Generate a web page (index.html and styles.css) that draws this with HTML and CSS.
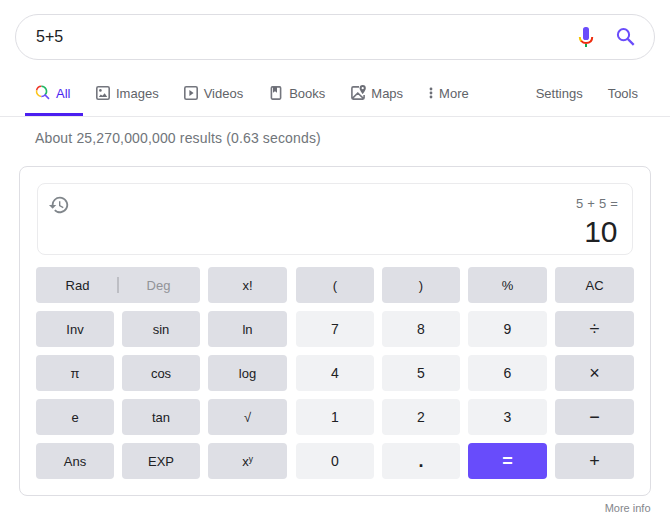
FILE: index.html
```html
<!DOCTYPE html>
<html lang="en">
<head>
<meta charset="utf-8">
<title>5+5</title>
<link rel="stylesheet" href="styles.css">
</head>
<body>
<header class="search">
  <span class="query">5+5</span>
  <svg class="mic" viewBox="0 0 24 24" width="24" height="24" fill="none" stroke-width="2">
    <rect x="9" y="2" width="6" height="13" rx="2.6" fill="#6a4cfb"/>
    <path d="M5.8 12q0 2.5 1.6 4.2" stroke="#f5c400"/>
    <path d="M7.2 15.8Q9.2 18 12 18q6.2 0 6.2-6" stroke="#ee2c0e"/>
    <path d="M12 19v3" stroke="#12a84f"/>
  </svg>
  <svg class="glass" viewBox="0 0 24 24" width="24" height="24" fill="none" stroke="#6a4cfb" stroke-width="2">
    <circle cx="9.5" cy="9.7" r="5.6"/><path d="M13.7 13.9l6 6" stroke-width="2.2"/>
  </svg>
</header>
<nav class="tabs">
  <a class="tab active"><svg viewBox="0 0 16 16" fill="none" stroke-width="1.5">
    <path d="M1.6 5.4A5 5 0 0 1 6.4 1.3" stroke="#ee3524"/><path d="M6.4 1.3a5 5 0 0 1 3.6 8.6" stroke="#20b866"/>
    <path d="M1.6 5.4a5 5 0 0 0 4.8 6" stroke="#fcc51a"/><path d="M6.4 11.4a5 5 0 0 0 3.6-1.5l4 4" stroke="#6a4cfb"/>
  </svg>All</a>
  <a class="tab"><svg viewBox="0 0 16 16"><rect class="line" x="1.8" y="1.8" width="12.4" height="12.4" rx="1.4"/><circle cx="5.4" cy="5.4" r="1.3"/><path d="M3.8 12l2-2.4 1.6 1.2 2.3-2.6 2.5 3.8z"/></svg>Images</a>
  <a class="tab"><svg viewBox="0 0 16 16"><rect class="line" x="1.8" y="1.8" width="12.4" height="12.4" rx="1.4"/><path d="M6.4 5v6l4.2-3z"/></svg>Videos</a>
  <a class="tab books"><svg viewBox="0 0 16 16"><rect class="line" x="3.4" y="1.9" width="9.2" height="12.2" rx="1"/><path d="M5 2h4v5.8L7 6.3 5 7.8z"/></svg>Books</a>
  <a class="tab maps"><svg viewBox="0 0 16 16"><path class="line" d="M9 1.9H3.2Q1.9 1.9 1.9 3.2v9.6q0 1.3 1.3 1.3h9.6q1.3 0 1.3-1.3V10M2.4 13.4L7.8 8l5.8 5.6"/><path fill-rule="evenodd" d="M12.7 0A3.1 3.1 0 0 0 9.6 3.2c0 2.2 3.1 5.8 3.1 5.8s3.1-3.6 3.1-5.8A3.1 3.1 0 0 0 12.7 0zm0 2.1a1.1 1.1 0 1 1 0 2.2 1.1 1.1 0 0 1 0-2.2z"/></svg>Maps</a>
  <a class="tab more"><svg viewBox="0 0 16 16"><circle cx="8" cy="4" r="1.4"/><circle cx="8" cy="8" r="1.4"/><circle cx="8" cy="12" r="1.4"/></svg>More</a>
  <a class="tool settings">Settings</a>
  <a class="tool">Tools</a>
</nav>
<p class="stats">About 25,270,000,000 results (0.63 seconds)</p>
<main class="card">
  <div class="display">
    <svg viewBox="0 0 24 24" width="22" height="22" fill="#80868b"><path d="M13 3a9 9 0 0 0-9 9H1l3.9 3.9.1.1 4-4H6a7 7 0 1 1 2.1 4.9l-1.4 1.5A9 9 0 1 0 13 3zm-1 5v5l4.3 2.5.7-1.2-3.5-2.1V8z"/></svg>
    <div class="readout"><div class="expr">5 + 5 =</div><div class="result">10</div></div>
  </div>
  <div class="keys">
    <div class="key mode"><span>Rad</span><i></i><span class="off">Deg</span></div>
    <div class="key">x!</div><div class="key">(</div><div class="key">)</div><div class="key">%</div><div class="key">AC</div>
    <div class="key">Inv</div><div class="key">sin</div><div class="key">ln</div><div class="key num">7</div><div class="key num">8</div><div class="key num">9</div><div class="key op">÷</div>
    <div class="key">π</div><div class="key">cos</div><div class="key">log</div><div class="key num">4</div><div class="key num">5</div><div class="key num">6</div><div class="key op">×</div>
    <div class="key">e</div><div class="key">tan</div><div class="key">√</div><div class="key num">1</div><div class="key num">2</div><div class="key num">3</div><div class="key op">−</div>
    <div class="key">Ans</div><div class="key">EXP</div><div class="key"><span>x<sup>y</sup></span></div><div class="key num">0</div><div class="key num dot">.</div><div class="key equals">=</div><div class="key op">+</div>
  </div>
</main>
<footer class="info">More info</footer>
</body>
</html>
```
FILE: styles.css
```css
* { box-sizing: border-box; }
body {
  margin: 0;
  height: 520px;
  overflow: hidden;
  background: #fff;
  color: #202124;
  font-family: "Liberation Sans", Arial, sans-serif;
}
.search {
  display: flex;
  align-items: center;
  height: 46px;
  margin: 14px 15px 0;
  padding: 0 16px 0 20px;
  border: 1px solid #dedee3;
  border-radius: 23px;
}
.query { flex: 1; font-size: 16px; }
.glass { margin-left: 16px; }
.tabs {
  display: flex;
  height: 57px;
  padding-left: 25px;
  border-bottom: 1px solid #e8e8eb;
}
.tab {
  display: flex;
  align-items: center;
  height: 57px;
  margin-right: 2px;
  padding: 10px 12px 0 10px;
  color: #5f6368;
  font-size: 13px;
}
.tab svg { width: 16px; height: 16px; margin: 0 5px 2px 0; fill: #6c6e76; }
.tab .line { fill: none; stroke: #74767e; stroke-width: 1.6; }
.tab.active {
  width: 58px;
  height: 56px;
  padding-right: 0;
  padding-top: 14px;
  border-bottom: 3px solid #4b1ff0;
  color: #4b1ff0;
}
.tab.active svg { margin-bottom: 1px; fill: none; }
.books, .maps { padding-left: 11px; }
.more { padding-left: 6px; }
.tab.more svg { margin-right: 0; }
.tool {
  padding-top: 26px;
  margin-right: 32px;
  color: #5f6368;
  font-size: 13px;
  line-height: 15px;
}
.settings { margin-left: auto; margin-right: 25px; }
.stats {
  margin: 12px 0 0 35px;
  color: #70757a;
  font-size: 14px;
  line-height: 18px;
  letter-spacing: 0.15px;
}
.card {
  width: 632px;
  height: 330px;
  margin: 19px 0 0 19px;
  padding: 16px 16px 0;
  border: 1px solid #dedee3;
  border-radius: 8px;
}
.display {
  display: flex;
  justify-content: space-between;
  width: 596px;
  height: 72px;
  margin-left: 1px;
  padding: 10px 14px 0 10px;
  border: 1px solid #ebebed;
  border-radius: 8px;
}
.readout { text-align: right; }
.expr { margin-top: 2px; color: #70757a; font-size: 13px; line-height: 15px; letter-spacing: 0.2px; }
.result { margin-right: 0.5px; font-size: 30px; line-height: 42px; }
.keys {
  display: grid;
  grid-template-columns: 78px 78px 80px 78px 78px 79px 79px;
  grid-auto-rows: 36px;
  gap: 8px;
  margin-top: 12px;
}
.key {
  display: flex;
  align-items: center;
  justify-content: center;
  border-radius: 4px;
  background: #dedfe5;
  font-size: 13px;
}
.key:nth-child(7n + 2) { margin-right: 1px; }
.num { background: #f1f2f4; font-size: 14px; }
.op { font-size: 18px; }
.dot { font-size: 18px; font-weight: bold; }
.equals { background: #684cfb; color: #fff; font-size: 18px; font-weight: bold; }
.mode { grid-column: span 2; padding: 0 2px; }
.mode span { flex: 1; text-align: center; }
.mode i { width: 2px; height: 16px; background: #bdbec4; }
.mode .off { color: #929398; }
.key sup { font-size: 8.5px; line-height: 0; vertical-align: 4px; }
.info {
  margin: 6px 19.5px 0;
  color: #84868b;
  font-size: 11px;
  line-height: 13px;
  text-align: right;
}
```
